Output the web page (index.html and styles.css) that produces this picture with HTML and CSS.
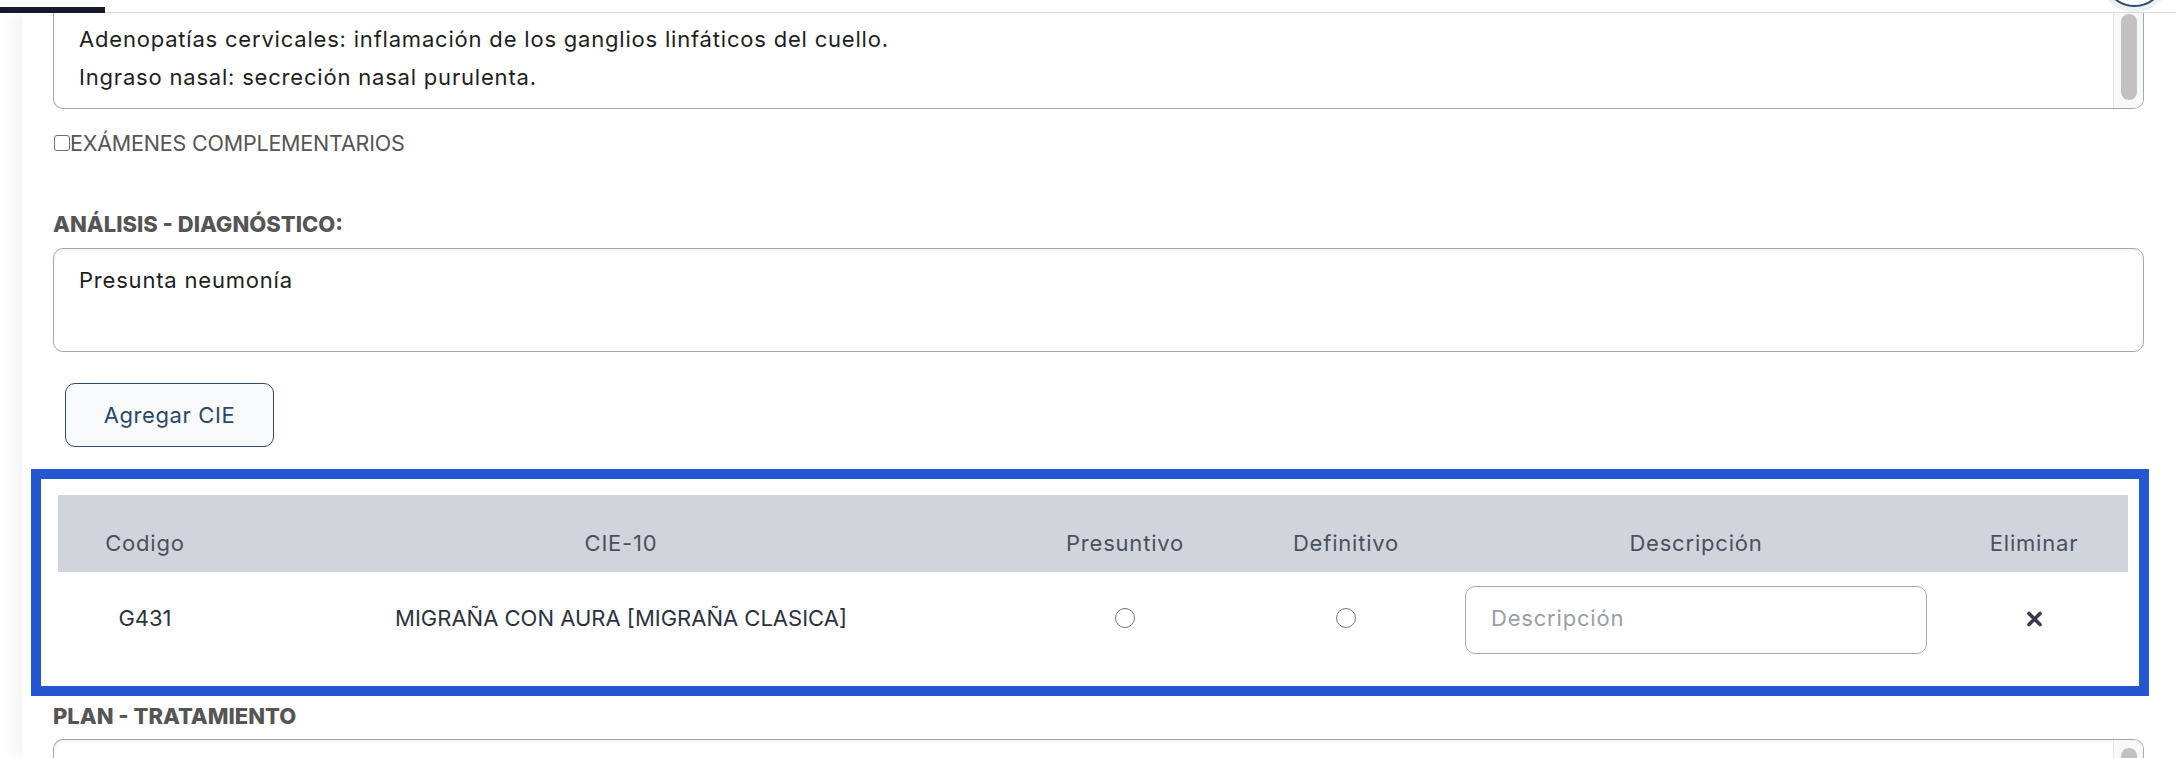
FILE: index.html
```html
<!DOCTYPE html>
<html lang="es">
<head>
<meta charset="utf-8">
<title>Historia clínica</title>
<link rel="stylesheet" href="styles.css">
</head>
<body>
<header class="topbar">
  <div class="tab-active"></div>
  <div class="avatar"></div>
</header>
<main class="card">
  <div class="textbox textbox-cut">
    <div class="textbox-text">
      <p>Adenopatías cervicales: inflamación de los ganglios linfáticos del cuello.</p>
      <p>Ingraso nasal: secreción nasal purulenta.</p>
    </div>
    <div class="scrolltrack"><div class="scrollthumb"></div></div>
  </div>

  <label class="check-row"><span class="checkbox"></span>EXÁMENES COMPLEMENTARIOS</label>

  <h3 class="section-label label-analisis">ANÁLISIS - DIAGNÓSTICO:</h3>
  <div class="textbox textbox-full">
    <div class="textbox-text"><p>Presunta neumonía</p></div>
  </div>

  <button class="btn-outline" type="button">Agregar CIE</button>

  <section class="cie-box">
    <table class="cie-table">
      <colgroup>
        <col class="c1"><col class="c2"><col class="c3"><col class="c4"><col class="c5"><col class="c6">
      </colgroup>
      <thead>
        <tr>
          <th>Codigo</th>
          <th>CIE-10</th>
          <th>Presuntivo</th>
          <th>Definitivo</th>
          <th>Descripción</th>
          <th>Eliminar</th>
        </tr>
      </thead>
      <tbody>
        <tr>
          <td class="caps">G431</td>
          <td class="caps">MIGRAÑA CON AURA [MIGRAÑA CLASICA]</td>
          <td class="ctrl"><span class="radio"></span></td>
          <td class="ctrl"><span class="radio"></span></td>
          <td class="ctrl"><div class="desc-input">Descripción</div></td>
          <td class="ctrl">
            <svg class="x-icon" width="17" height="16" viewBox="0 0 17 16" aria-hidden="true">
              <path d="M3 2.5 L14 13.5 M14 2.5 L3 13.5" stroke="#363b4b" stroke-width="3.6" stroke-linecap="round" fill="none"/>
            </svg>
          </td>
        </tr>
      </tbody>
    </table>
  </section>

  <h3 class="section-label label-plan">PLAN - TRATAMIENTO</h3>
  <div class="textbox textbox-bottom">
    <div class="textbox-text"></div>
    <div class="scrolltrack"><div class="scrollthumb thumb-low"></div></div>
  </div>
</main>
</body>
</html>
```

FILE: styles.css
```css
* { box-sizing: border-box; }

html, body {
  margin: 0;
  padding: 0;
  background: #ffffff;
  overflow: hidden;
}

body {
  width: 2176px;
  height: 758px;
  font-family: "Inter", "Noto Sans", sans-serif;
  font-size: 22px;
  letter-spacing: 0.8px;
  color: #1e1e22;
  position: relative;
}

/* top bar */
.topbar {
  position: relative;
  height: 13px;
  border-bottom: 1px solid #d8d9dc;
  background: #fff;
  z-index: 2;
}
.tab-active {
  position: absolute;
  left: 0;
  bottom: -1px;
  width: 105px;
  height: 6px;
  background: #151b2b;
}
.avatar {
  position: absolute;
  left: 2103px;
  top: -56px;
  width: 63px;
  height: 63px;
  border-radius: 50%;
  border: 2px solid #2b4a6e;
  background: #fff;
  box-shadow: 0 0 0 5px #eeeff1;
}

/* card */
.card {
  margin-left: 22px;
  padding: 0 32px 0 31px;
  background: #fff;
  box-shadow: -8px 0 14px rgba(0, 0, 0, 0.05);
  height: 745px;
}

.textbox {
  display: flex;
  border: 1px solid #a2a8b6;
  border-radius: 10px;
  background: #fff;
  overflow: hidden;
  box-shadow: inset 0 2px 3px rgba(0, 0, 0, 0.05);
}
.textbox-text {
  flex: 1;
  padding-left: 25px;
}
.textbox-text p {
  margin: 0;
  line-height: 38px;
  white-space: nowrap;
}

.textbox-cut {
  height: 96px;
  border-top: none;
  border-top-left-radius: 0;
  border-top-right-radius: 0;
  box-shadow: none;
}
.textbox-cut .textbox-text { padding-top: 7px; }

.scrolltrack {
  width: 30px;
  background: #f8f8f8;
  border-left: 1px solid #e6e6e6;
  padding: 1px 6px 0 7px;
}
.scrollthumb {
  height: 86px;
  border-radius: 8px;
  background: #c1c1c1;
}
.thumb-low { margin-top: 7px; height: 60px; }

.check-row {
  display: flex;
  align-items: center;
  height: 30px;
  margin-top: 19px;
  color: #555;
  font-size: 21.5px;
  letter-spacing: -0.2px;
}
.checkbox {
  width: 16px;
  height: 16px;
  margin-left: 1px;
  border: 1px solid #6f6f6f;
  border-radius: 3px;
  background: #fff;
}

.section-label {
  margin: 0;
  font-size: 22px;
  font-weight: 800;
  line-height: 30px;
  color: #555;
  letter-spacing: 0;
}
.label-analisis { margin-top: 51px; }
.label-plan { margin-top: 5px; }

.textbox-full {
  height: 104px;
  margin-top: 9px;
}
.textbox-full .textbox-text { padding-top: 16px; }
.textbox-full .textbox-text p { line-height: 30px; }

.btn-outline {
  display: block;
  margin: 31px 0 0 12px;
  width: 209px;
  height: 64px;
  border: 1px solid #2e4c6f;
  border-radius: 10px;
  background: #f8fafc;
  color: #2b486b;
  font-family: inherit;
  font-size: 22px;
  letter-spacing: 0.6px;
  padding: 0;
}

/* CIE table box */
.cie-box {
  margin: 22px -5px 0 -22px;
  border: 10px solid #2456d1;
  padding: 16px 11px 18px 17px;
  background: #fff;
}
.cie-table {
  width: 100%;
  border-collapse: collapse;
  table-layout: fixed;
}
.c1 { width: 174px; }
.c2 { width: 778px; }
.c3 { width: 230px; }
.c4 { width: 212px; }
.c5 { width: 488px; }
.c6 { width: 188px; }

.cie-table th {
  background: #d1d5db;
  color: #4b5060;
  font-weight: 400;
  font-size: 22px;
  line-height: 30px;
  padding: 33px 0 14px;
  text-align: center;
}
.cie-table td {
  height: 96px;
  padding: 0 0 5px;
  text-align: center;
  vertical-align: middle;
  color: #2d3240;
  font-size: 22px;
  line-height: 30px;
}
.cie-table td.caps { letter-spacing: 0; }
.cie-table td.ctrl { padding: 0; }
.radio {
  display: block;
  margin: -4px auto 0;
  width: 20px;
  height: 20px;
  border: 1.6px solid #767676;
  border-radius: 50%;
}
.desc-input {
  margin: 0 13px;
  height: 68px;
  border: 1px solid #a2a8b6;
  border-radius: 10px;
  display: flex;
  align-items: center;
  padding: 0 0 4px 25px;
  color: #9a9ea8;
  text-align: left;
}
.x-icon { display: block; margin: -2px auto 0; }

.textbox-bottom {
  margin-top: 8px;
  height: 60px;
  border-bottom: none;
  border-bottom-left-radius: 0;
  border-bottom-right-radius: 0;
}
```
